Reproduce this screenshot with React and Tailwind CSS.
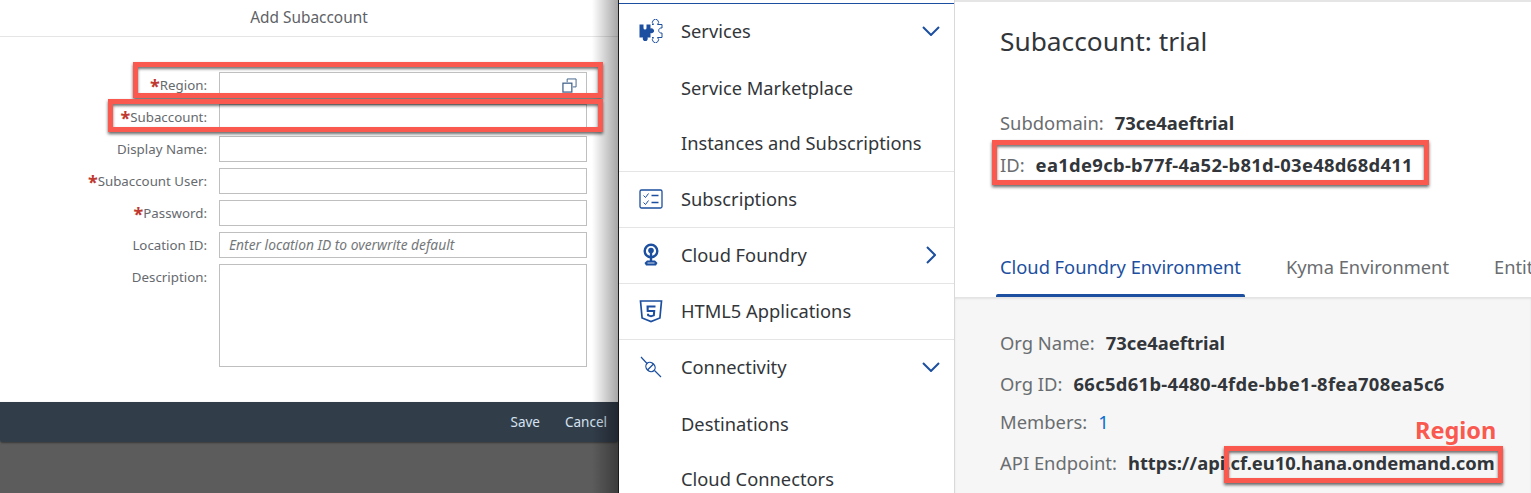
import React from 'react';

const blue = '#1c4f9f';

function PuzzleIcon() {
  return (
    <svg width="24" height="24" viewBox="0 0 24 24" className="block">
      <path d="M0.500 5.500H4.500V9A1.500 1.500 0 0 0 7.500 9V5.500H11.500V9.500A2.500 2.500 0 1 1 11.500 14V18.500H8.500A2.500 2.500 0 1 1 4 18.500H0.500Z" fill={blue} />
      <path d="M13 5.500H14.500A3 3 0 1 1 18.500 5.500H23V9A2.600 2.600 0 1 0 23 14V18.500H18.500A3 3 0 1 1 14.500 18.500H13" fill="none" stroke={blue} strokeWidth="1" />
    </svg>
  );
}

function ChecklistIcon() {
  return (
    <svg width="24" height="22" viewBox="0 0 24 22" className="block">
      <rect x="1" y="2" width="22" height="18" rx="1.500" fill="none" stroke={blue} strokeWidth="1.300" />
      <path d="M4.500 7.500l2 2 3-4M4.500 14.500l2 2 3-4" fill="none" stroke={blue} strokeWidth="1" />
      <path d="M12.500 7.500h7M12.500 14.500h7" fill="none" stroke={blue} strokeWidth="1.500" />
    </svg>
  );
}

function FoundryIcon() {
  return (
    <svg width="22" height="24" viewBox="0 0 22 24" className="block">
      <circle cx="11" cy="8" r="6.300" fill="none" stroke={blue} strokeWidth="2.400" />
      <circle cx="11" cy="7.500" r="2.800" fill={blue} />
      <path d="M9.800 8h2.400v10h-2.400z" fill={blue} />
      <path d="M7 17.500h8l2.500 2.500-1.500 2.500H6L4.500 20z" fill={blue} />
      <path d="M7.500 20h7" stroke="white" strokeWidth="0.800" />
    </svg>
  );
}

function Html5Icon() {
  return (
    <svg width="24" height="24" viewBox="0 0 24 24" className="block">
      <path d="M1.500 2h21l-1.600 17L12 22.500 3.100 19z" fill="none" stroke={blue} strokeWidth="1.700" />
      <path d="M7.500 6.500h9v2h-6.800v2.500h6.600l-.5 6-3.800 1.200-3.800-1.200-.2-2.300h2l.1 1 1.900.5 1.900-.5.200-2.700H7.700z" fill={blue} />
    </svg>
  );
}

function PlugIcon() {
  return (
    <svg width="22" height="22" viewBox="0 0 22 22" className="block">
      <path d="M1 1l6 6.500M14.500 14.500L21 21" fill="none" stroke={blue} strokeWidth="1.200" />
      <ellipse cx="10.500" cy="11" rx="4.200" ry="5" transform="rotate(-45 10.500 11)" fill="none" stroke={blue} strokeWidth="1.300" />
      <path d="M13.500 8L7.500 14" fill="none" stroke={blue} strokeWidth="1.200" />
    </svg>
  );
}

function Chevron({ open }) {
  return open ? (
    <svg width="18" height="10" viewBox="0 0 18 10" className="block">
      <path d="M1 1l8 8 8-8" fill="none" stroke={blue} strokeWidth="2" />
    </svg>
  ) : (
    <svg width="10" height="18" viewBox="0 0 10 18" className="block">
      <path d="M1 1l8 8-8 8" fill="none" stroke={blue} strokeWidth="2" />
    </svg>
  );
}

function NavRow({ icon, label, chevron, border, flush }) {
  return (
    <div className={`flex h-[56px] items-center text-[18.300px] text-[#32363a] ${flush ? '' : 'pb-[2px]'} ${border ? 'border-b border-[#e5e5e5]' : ''}`}>
      <div className="flex w-[62px] justify-center pl-[1px]">{icon}</div>
      <span className="flex-1">{label}</span>
      {chevron && <div className="flex w-[46px] justify-center">{chevron}</div>}
    </div>
  );
}

function FormRow({ label, required, h = 'h-[26px]', placeholder, icon }) {
  return (
    <div className="flex gap-[12px]">
      <div className={`w-[207px] text-right text-[13.300px] leading-[26px] text-[#666a6e] ${h}`}>
        {required && <span className="align-[-3px] text-[18px] leading-[0] font-bold text-[#c0392f]">*</span>}
        {label}:
      </div>
      <div className={`flex w-[368px] items-center border border-[#bfbfbf] bg-white pl-[9px] pr-[9px] ${h}`}>
        {placeholder && <span className="text-[13.800px] italic text-[#74777a]">{placeholder}</span>}
        {icon && <div className="ml-auto">{icon}</div>}
      </div>
    </div>
  );
}

function InfoRow({ label, value, h, link, wide }) {
  return (
    <div className={`flex items-center gap-[11px] text-[18.400px] ${h}`}>
      <span className="text-[#6a6d70]">{label}:</span>
      {link ? (
        <span className="text-[#0a6ed1]">{value}</span>
      ) : (
        <span className={`font-bold text-[#32363a] ${wide ? 'tracking-[0.320px]' : ''}`}>{value}</span>
      )}
    </div>
  );
}

function Callout({ className }) {
  return (
    <div className={`absolute border-[5px] border-[#f9594f] shadow-[0_2px_3px_rgba(0,0,0,0.6),inset_0_2px_3px_rgba(0,0,0,0.55)] ${className}`} />
  );
}

export default function App() {
  return (
    <div className="relative flex h-[493px] w-[1531px] overflow-hidden bg-white font-['Noto_Sans',sans-serif]">
      {/* dialog */}
      <div className="relative flex w-[618px] shrink-0 flex-col bg-[#5c5c5c]">
        <div className="h-[402px] bg-white">
          <div className="flex h-[37px] items-center justify-center border-b border-[#e5e5e5] text-[15.400px] text-[#5e6266]">Add Subaccount</div>
          <div className="flex flex-col gap-[6px] pt-[35px]">
            <FormRow
              label="Region"
              required
              icon={
                <svg width="15" height="15" viewBox="0 0 16 16" className="block">
                  <path d="M5.500 4.500V1h9.500v8.500h-3.500" fill="none" stroke="#3c5f88" strokeWidth="1" />
                  <rect x="1" y="5.500" width="9.500" height="9.500" fill="none" stroke="#3c5f88" strokeWidth="1.300" />
                </svg>
              }
            />
            <FormRow label="Subaccount" required />
            <FormRow label="Display Name" />
            <FormRow label="Subaccount User" required />
            <FormRow label="Password" required />
            <FormRow label="Location ID" placeholder="Enter location ID to overwrite default" />
            <FormRow label="Description" h="h-[103px]" />
          </div>
        </div>
        <div className="flex h-[40px] items-center justify-end gap-[25px] rounded-b-[3px] bg-[#323d4a] pr-[11px] text-[13.500px] text-[#d5e3f0] shadow-[0_1px_2px_rgba(0,0,0,0.4)]">
          <span>Save</span>
          <span>Cancel</span>
        </div>
        <div className="absolute top-0 right-0 h-full w-[26px] bg-gradient-to-r from-transparent to-black/35" />
      </div>

      <div className="w-[1px] shrink-0 bg-[#1a1a1a]" />

      {/* side navigation */}
      <div className="w-[335px] shrink-0 pt-[3px]">
        <div className="border-t border-t-[#1c4f9f]">
          <NavRow icon={<PuzzleIcon />} label="Services" chevron={<Chevron open />} />
          <NavRow label="Service Marketplace" flush />
          <NavRow label="Instances and Subscriptions" border />
          <NavRow icon={<ChecklistIcon />} label="Subscriptions" border />
          <NavRow icon={<FoundryIcon />} label="Cloud Foundry" chevron={<Chevron />} border />
          <NavRow icon={<Html5Icon />} label="HTML5 Applications" border />
          <NavRow icon={<PlugIcon />} label="Connectivity" chevron={<Chevron open />} />
          <NavRow label="Destinations" flush />
          <NavRow label="Cloud Connectors" />
        </div>
      </div>

      <div className="w-[1px] shrink-0 bg-[#d9d9d9]" />

      {/* subaccount details */}
      <div className="flex min-w-0 flex-1 flex-col">
        <div className="h-[297px] border-t-[2px] border-[#e5e5e5] pl-[45px]">
          <h1 className="pt-[20px] text-[26.300px] leading-[38px] text-[#32363a]">Subaccount: trial</h1>
          <div className="pt-[42px]">
            <InfoRow label="Subdomain" value="73ce4aeftrial" h="h-[42px]" />
            <InfoRow label="ID" value="ea1de9cb-b77f-4a52-b81d-03e48d68d411" wide h="h-[42px]" />
          </div>
          <div className="flex gap-[45px] whitespace-nowrap pt-[67px] text-[18.300px] leading-[28px]">
            <span className="text-[#1c4f9f]">Cloud Foundry Environment</span>
            <span className="text-[#6a6d70]">Kyma Environment</span>
            <span className="text-[#6a6d70]">Entitlements</span>
          </div>
        </div>
        <div className="relative flex-1 bg-[#f6f6f6] pt-[25px] pl-[45px] shadow-[inset_0_2px_2px_rgba(0,0,0,0.08)]">
          <div className="absolute top-[-3px] left-[41px] h-[3px] w-[249px] rounded-t-[2px] bg-[#1c4f9f]" />
          <InfoRow label="Org Name" value="73ce4aeftrial" h="h-[42px]" />
          <InfoRow label="Org ID" value="66c5d61b-4480-4fde-bbe1-8fea708ea5c6" wide h="h-[39px]" />
          <InfoRow label="Members" value="1" link h="h-[38px]" />
          <InfoRow label="API Endpoint" value="https://api.cf.eu10.hana.ondemand.com" h="h-[44px]" />
        </div>
      </div>

      {/* annotations */}
      <Callout className="top-[62px] left-[133px] h-[36px] w-[470px]" />
      <Callout className="top-[99px] left-[108px] h-[33px] w-[495px]" />
      <Callout className="top-[140px] left-[992px] h-[45px] w-[437px]" />
      <Callout className="top-[446px] left-[1224px] h-[37px] w-[279px]" />
      <div className="absolute top-[415px] left-[1415px] text-[23.500px] leading-[30px] font-bold text-[#f9594f] [text-shadow:0_0_3px_white]">Region</div>
    </div>
  );
}
